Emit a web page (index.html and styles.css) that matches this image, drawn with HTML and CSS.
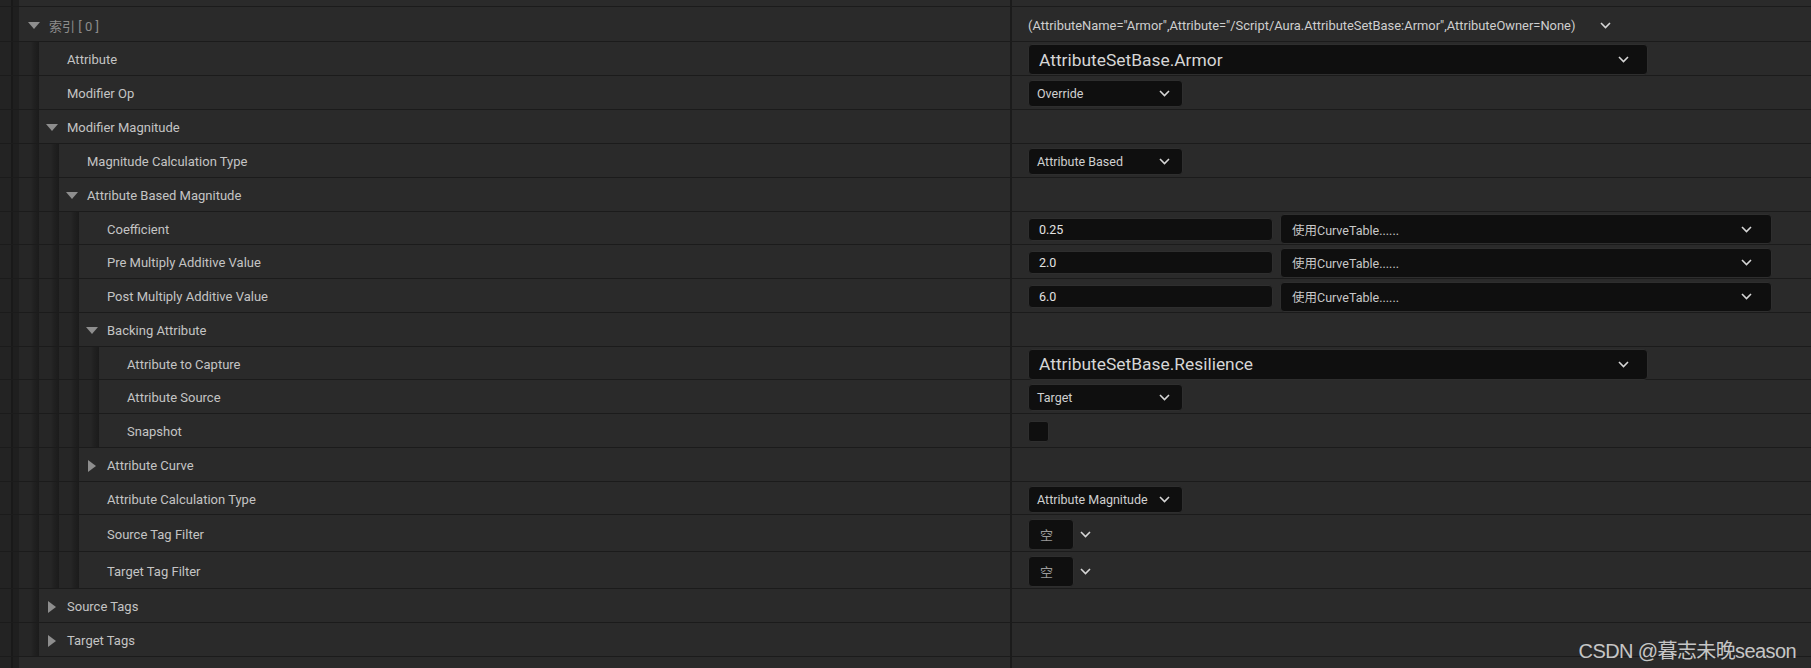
FILE: index.html
```html
<!DOCTYPE html>
<html>
<head>
<meta charset="utf-8">
<link rel="stylesheet" href="styles.css">
</head>
<body>
<div class="panel">
  <div class="row r7"><div class="name"><span class="ind i0"></span></div><div class="val"></div></div>

  <div class="row r35">
    <div class="name"><span class="ind i0"></span><span class="tw tw-first"><span class="tri down"></span></span><span class="label dim">索引 [ 0 ]</span></div>
    <div class="val"><span class="vtext">(AttributeName="Armor",Attribute="/Script/Aura.AttributeSetBase:Armor",AttributeOwner=None)</span><svg class="chev chev-gap" viewBox="0 0 11 7"><path d="M1 1L5.5 5.5L10 1"/></svg></div>
  </div>

  <div class="row">
    <div class="name"><span class="ind i0"></span><span class="ind"></span><span class="tw"></span><span class="label">Attribute</span></div>
    <div class="val"><div class="combo big"><span>AttributeSetBase.Armor</span><svg class="chev" viewBox="0 0 11 7"><path d="M1 1L5.5 5.5L10 1"/></svg></div></div>
  </div>

  <div class="row">
    <div class="name"><span class="ind i0"></span><span class="ind"></span><span class="tw"></span><span class="label">Modifier Op</span></div>
    <div class="val"><div class="combo small"><span>Override</span><svg class="chev" viewBox="0 0 11 7"><path d="M1 1L5.5 5.5L10 1"/></svg></div></div>
  </div>

  <div class="row">
    <div class="name"><span class="ind i0"></span><span class="ind"></span><span class="tw"><span class="tri down"></span></span><span class="label">Modifier Magnitude</span></div>
    <div class="val"></div>
  </div>

  <div class="row">
    <div class="name"><span class="ind i0"></span><span class="ind"></span><span class="ind"></span><span class="tw"></span><span class="label">Magnitude Calculation Type</span></div>
    <div class="val"><div class="combo small"><span>Attribute Based</span><svg class="chev" viewBox="0 0 11 7"><path d="M1 1L5.5 5.5L10 1"/></svg></div></div>
  </div>

  <div class="row">
    <div class="name"><span class="ind i0"></span><span class="ind"></span><span class="ind"></span><span class="tw"><span class="tri down"></span></span><span class="label">Attribute Based Magnitude</span></div>
    <div class="val"></div>
  </div>

  <div class="row r33">
    <div class="name"><span class="ind i0"></span><span class="ind"></span><span class="ind"></span><span class="ind"></span><span class="tw"></span><span class="label">Coefficient</span></div>
    <div class="val"><div class="num">0.25</div><div class="combo curve"><span>使用CurveTable......</span><svg class="chev" viewBox="0 0 11 7"><path d="M1 1L5.5 5.5L10 1"/></svg></div></div>
  </div>

  <div class="row">
    <div class="name"><span class="ind i0"></span><span class="ind"></span><span class="ind"></span><span class="ind"></span><span class="tw"></span><span class="label">Pre Multiply Additive Value</span></div>
    <div class="val"><div class="num">2.0</div><div class="combo curve"><span>使用CurveTable......</span><svg class="chev" viewBox="0 0 11 7"><path d="M1 1L5.5 5.5L10 1"/></svg></div></div>
  </div>

  <div class="row">
    <div class="name"><span class="ind i0"></span><span class="ind"></span><span class="ind"></span><span class="ind"></span><span class="tw"></span><span class="label">Post Multiply Additive Value</span></div>
    <div class="val"><div class="num">6.0</div><div class="combo curve"><span>使用CurveTable......</span><svg class="chev" viewBox="0 0 11 7"><path d="M1 1L5.5 5.5L10 1"/></svg></div></div>
  </div>

  <div class="row">
    <div class="name"><span class="ind i0"></span><span class="ind"></span><span class="ind"></span><span class="ind"></span><span class="tw"><span class="tri down"></span></span><span class="label">Backing Attribute</span></div>
    <div class="val"></div>
  </div>

  <div class="row r33">
    <div class="name"><span class="ind i0"></span><span class="ind"></span><span class="ind"></span><span class="ind"></span><span class="ind"></span><span class="tw"></span><span class="label">Attribute to Capture</span></div>
    <div class="val"><div class="combo big"><span>AttributeSetBase.Resilience</span><svg class="chev" viewBox="0 0 11 7"><path d="M1 1L5.5 5.5L10 1"/></svg></div></div>
  </div>

  <div class="row">
    <div class="name"><span class="ind i0"></span><span class="ind"></span><span class="ind"></span><span class="ind"></span><span class="ind"></span><span class="tw"></span><span class="label">Attribute Source</span></div>
    <div class="val"><div class="combo small"><span>Target</span><svg class="chev" viewBox="0 0 11 7"><path d="M1 1L5.5 5.5L10 1"/></svg></div></div>
  </div>

  <div class="row">
    <div class="name"><span class="ind i0"></span><span class="ind"></span><span class="ind"></span><span class="ind"></span><span class="ind"></span><span class="tw"></span><span class="label">Snapshot</span></div>
    <div class="val"><div class="check"></div></div>
  </div>

  <div class="row">
    <div class="name"><span class="ind i0"></span><span class="ind"></span><span class="ind"></span><span class="ind"></span><span class="tw"><span class="tri right"></span></span><span class="label">Attribute Curve</span></div>
    <div class="val"></div>
  </div>

  <div class="row r33">
    <div class="name"><span class="ind i0"></span><span class="ind"></span><span class="ind"></span><span class="ind"></span><span class="tw"></span><span class="label">Attribute Calculation Type</span></div>
    <div class="val"><div class="combo small"><span>Attribute Magnitude</span><svg class="chev" viewBox="0 0 11 7"><path d="M1 1L5.5 5.5L10 1"/></svg></div></div>
  </div>

  <div class="row r37">
    <div class="name"><span class="ind i0"></span><span class="ind"></span><span class="ind"></span><span class="ind"></span><span class="tw"></span><span class="label">Source Tag Filter</span></div>
    <div class="val"><div class="tagbox">空</div><svg class="chev tagchev" viewBox="0 0 11 7"><path d="M1 1L5.5 5.5L10 1"/></svg></div>
  </div>

  <div class="row r37">
    <div class="name"><span class="ind i0"></span><span class="ind"></span><span class="ind"></span><span class="ind"></span><span class="tw"></span><span class="label">Target Tag Filter</span></div>
    <div class="val"><div class="tagbox">空</div><svg class="chev tagchev" viewBox="0 0 11 7"><path d="M1 1L5.5 5.5L10 1"/></svg></div>
  </div>

  <div class="row">
    <div class="name"><span class="ind i0"></span><span class="ind"></span><span class="tw"><span class="tri right"></span></span><span class="label">Source Tags</span></div>
    <div class="val"></div>
  </div>

  <div class="row">
    <div class="name"><span class="ind i0"></span><span class="ind"></span><span class="tw"><span class="tri right"></span></span><span class="label">Target Tags</span></div>
    <div class="val"></div>
  </div>

  <div class="row rlast"><div class="name"><span class="ind i0"></span></div><div class="val"></div></div>
</div>
<div class="watermark">CSDN @暮志未晚season</div>
</body>
</html>
```

FILE: styles.css
```css
* { box-sizing: border-box; }
html, body { margin: 0; padding: 0; }
body {
  width: 1811px;
  height: 668px;
  overflow: hidden;
  position: relative;
  background: #2a2a2a;
  font-family: Roboto, "Noto Sans CJK SC", sans-serif;
  font-size: 13px;
  color: #c4c4c4;
}
.panel { display: flex; flex-direction: column; }
.row {
  display: flex;
  flex: none;
  height: 34px;
  border-bottom: 1px solid #1b1b1b;
  background: #2a2a2a;
}
.row.r7 { height: 7px; }
.row.r33 { height: 33px; }
.row.r35 { height: 35px; }
.row.r37 { height: 37px; }
.row.rlast { height: 20px; border-bottom: 0; }
.name {
  width: 1010px;
  flex: none;
  display: flex;
  align-items: center;
}
.val {
  flex: 1;
  display: flex;
  align-items: center;
  border-left: 2px solid #1b1b1b;
  padding-left: 16px;
}
/* nudge row content 1px lower inside the centred flex line */
.name > .label,
.name > .tw,
.val > * { margin-top: 2px; }
.ind {
  align-self: stretch;
  width: 20px;
  flex: none;
  background: linear-gradient(to right, #262626 0, #262626 12px, #222 14px, #1b1b1b 20px);
}
.ind.i0 {
  width: 19px;
  background: linear-gradient(to right, #232323 0, #232323 11px, #191919 11px, #191919 13px, #1f1f1f 13px, #1f1f1f 19px);
}
.tw {
  width: 28px;
  flex: none;
  display: flex;
  align-items: center;
  padding-left: 7px;
}
.tw-first { width: 30px; padding-left: 9px; }
.tri { display: block; width: 0; height: 0; }
.tri.down {
  border-left: 6px solid transparent;
  border-right: 6px solid transparent;
  border-top: 7px solid #8e8e8e;
}
.tri.right {
  margin-left: 2px;
  border-top: 6px solid transparent;
  border-bottom: 6px solid transparent;
  border-left: 8px solid #8e8e8e;
}
.label { white-space: nowrap; }
.label.dim { color: #8c8c8c; }
.vtext { font-size: 12.9px; color: #cfcfcf; white-space: nowrap; }
.chev { width: 11px; height: 7px; flex: none; }
.chev path { fill: none; stroke: #d6d6d6; stroke-width: 1.6; }
.chev-gap { margin-left: 25px; }
.combo {
  display: flex;
  align-items: center;
  justify-content: space-between;
  background: #0f0f0f;
  border: 1px solid #2e2e2e;
  border-radius: 4px;
  white-space: nowrap;
}
.combo.big {
  width: 620px;
  height: 31px;
  padding: 0 18px 0 10px;
  font-size: 17.4px;
  color: #d6d6d6;
}
.combo.small {
  width: 155px;
  height: 27px;
  padding: 0 12px 0 8px;
  font-size: 12.5px;
  color: #d0d0d0;
}
.combo.curve {
  width: 492px;
  height: 30px;
  margin-left: 7px;
  padding: 0 19px 0 11px;
  font-size: 12.5px;
  color: #c8c8c8;
}
.num {
  width: 245px;
  height: 23px;
  display: flex;
  align-items: center;
  padding-left: 10px;
  background: #0f0f0f;
  border: 1px solid #2e2e2e;
  border-radius: 4px;
  font-size: 12.5px;
  color: #e2e2e2;
}
.check {
  width: 21px;
  height: 21px;
  background: #0f0f0f;
  border: 1px solid #2e2e2e;
  border-radius: 3px;
}
.tagbox {
  width: 46px;
  height: 31px;
  display: flex;
  align-items: center;
  padding-left: 11px;
  background: #0f0f0f;
  border: 1px solid #2e2e2e;
  border-radius: 4px;
  font-size: 13px;
  color: #9a9a9a;
}
.tagchev { margin-left: 6px; }
.watermark {
  position: absolute;
  right: 15px;
  top: 635px;
  font-family: "Liberation Sans", "Noto Sans CJK SC", sans-serif;
  font-size: 20px;
  color: rgba(235, 235, 235, 0.82);
  white-space: nowrap;
  letter-spacing: -0.6px;
}
```
